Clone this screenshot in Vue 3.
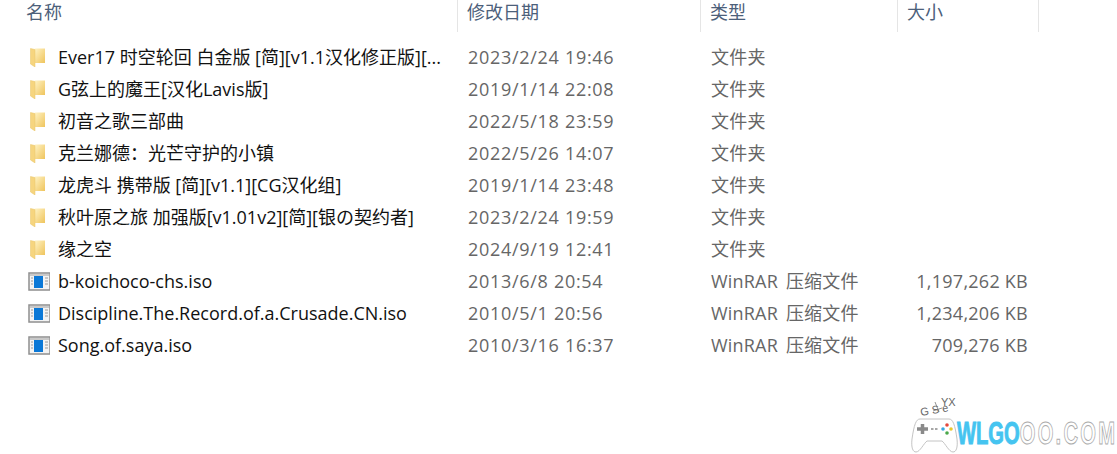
<template>
  <div class="explorer">
    <div class="head">
      <div v-for="c in columns" :key="c.label" class="head-cell" :class="c.cls">{{ c.label }}</div>
    </div>
    <div class="list">
      <div v-for="f in files" :key="f.name" class="row">
        <div class="name">
          <svg v-if="f.folder" class="icon" width="22" height="20" viewBox="0 0 22 20">
            <defs>
              <linearGradient id="fold" x1="0" y1="0" x2="1" y2="1">
                <stop offset="0" stop-color="#fff3c4" />
                <stop offset="1" stop-color="#efc45c" />
              </linearGradient>
            </defs>
            <path d="M7 1.500h10v14.500H7z" fill="url(#fold)" />
            <path d="M2.500 1.500 7 2.500v17.500L2.500 17z" fill="#f6d57f" stroke="#e9c469" stroke-width=".5" />
          </svg>
          <svg v-else class="icon" width="22" height="20" viewBox="0 0 22 20">
            <rect x="1" y="2" width="21" height="17" fill="#f3f3f3" stroke="#8f8f8f" stroke-width="1.500" />
            <rect x="2" y="3" width="19" height="2" fill="#c9c9c9" />
            <rect x="6" y="5" width="9" height="12" fill="#0a78d7" />
            <path d="M3 7h2M3 10h2M3 13h2M17 7h3M17 10h3M17 13h3" stroke="#9a9a9a" stroke-width="1" />
          </svg>
          <span class="label">{{ f.name }}</span>
        </div>
        <div class="cell date">{{ f.date }}</div>
        <div class="cell type">{{ f.type }}</div>
        <div class="cell size">{{ f.size }}</div>
      </div>
    </div>
    <div class="mark">
      <svg width="50" height="66" viewBox="0 0 50 66" class="pad">
        <text x="11" y="28" class="scrawl" transform="rotate(-10 11 28)">G S e</text>
        <text x="31" y="18" class="scrawl">YX</text>
        <text x="20" y="37" class="scrawl small">HJ</text>
        <path d="M25 14 29 24M23 23l9-3" stroke="#777" stroke-width=".8" fill="none" />
        <path d="M10 31h29c4 0 6 6 8 20 1 9-1 13-4 13-4 0-8-9-11-11H17c-3 2-7 11-11 11-3 0-5-4-4-13 2-14 4-20 8-20z" fill="#fff" stroke="#c4c4c4" />
        <path d="M7 41h11M12.500 36v10" stroke="#8a8a8a" stroke-width="3.500" />
        <path d="M21 41h7" stroke="#8a8a8a" stroke-width="1.500" stroke-dasharray="2.500 1.500" />
        <circle cx="37" cy="37" r="1.800" fill="#e5483c" />
        <circle cx="41" cy="41" r="1.800" fill="#e9c82e" />
        <circle cx="37" cy="45" r="1.800" fill="#4aa84a" />
        <circle cx="33" cy="41" r="1.800" fill="#3aa8e0" />
      </svg>
      <span class="mark-text"><span class="blue">WLGO</span><span class="grey">OO.COM</span></span>
    </div>
  </div>
</template>

<script setup>
const columns = [
  { label: '名称', cls: 'c-name' },
  { label: '修改日期', cls: 'c-date' },
  { label: '类型', cls: 'c-type' },
  { label: '大小', cls: 'c-size' }
]

const folder = '文件夹'
const rar = 'WinRAR 压缩文件'

const files = [
  { name: 'Ever17 时空轮回 白金版 [简][v1.1汉化修正版][...', date: '2023/2/24 19:46', type: folder, size: '', folder: true },
  { name: 'G弦上的魔王[汉化Lavis版]', date: '2019/1/14 22:08', type: folder, size: '', folder: true },
  { name: '初音之歌三部曲', date: '2022/5/18 23:59', type: folder, size: '', folder: true },
  { name: '克兰娜德：光芒守护的小镇', date: '2022/5/26 14:07', type: folder, size: '', folder: true },
  { name: '龙虎斗 携带版 [简][v1.1][CG汉化组]', date: '2019/1/14 23:48', type: folder, size: '', folder: true },
  { name: '秋叶原之旅 加强版[v1.01v2][简][银の契约者]', date: '2023/2/24 19:59', type: folder, size: '', folder: true },
  { name: '缘之空', date: '2024/9/19 12:41', type: folder, size: '', folder: true },
  { name: 'b-koichoco-chs.iso', date: '2013/6/8 20:54', type: rar, size: '1,197,262 KB' },
  { name: 'Discipline.The.Record.of.a.Crusade.CN.iso', date: '2010/5/1 20:56', type: rar, size: '1,234,206 KB' },
  { name: 'Song.of.saya.iso', date: '2010/3/16 16:37', type: rar, size: '709,276 KB' }
]
</script>

<style>
html, body {
  background: #fff;
  overflow: hidden;
}
</style>

<style scoped>
.explorer {
  position: relative;
  width: 1117px;
  height: 454px;
  overflow: hidden;
  background: #fff;
  font-family: "Open Sans", "Noto Sans CJK SC", sans-serif;
  font-size: 18px;
}

.head {
  display: grid;
  grid-template-columns: 458px 243px 197px 141px;
  height: 32px;
  color: #4c607a;
}

.head-cell {
  padding-left: 9px;
  border-right: 1px solid #e5e5e5;
  line-height: 25px;
  box-sizing: border-box;
}

.c-name {
  padding-left: 26px;
}

.list {
  padding-top: 9px;
}

.row {
  display: grid;
  grid-template-columns: 458px 243px 197px 187px;
  height: 32px;
  line-height: 30px;
  align-items: center;
}

.name {
  display: flex;
  align-items: center;
  padding-left: 28px;
  color: #111;
  white-space: nowrap;
}

.icon {
  width: 22px;
  flex: none;
}

.label {
  margin-left: 8px;
}

.cell {
  padding-left: 10px;
  color: #666;
  white-space: nowrap;
}

.date {
  letter-spacing: 0.7px;
}

.type {
  word-spacing: 3px;
  letter-spacing: 0.2px;
}

.size {
  text-align: right;
  padding-right: 57px;
  letter-spacing: 0.25px;
}

.mark {
  position: absolute;
  left: 910px;
  top: 388px;
  display: flex;
}

.scrawl {
  font-size: 11px;
  fill: #666;
  font-family: "Liberation Sans", sans-serif;
}

.small {
  font-size: 9px;
}

.mark-text {
  position: absolute;
  left: 47px;
  top: 27px;
  font-family: "Liberation Sans", sans-serif;
  font-weight: 700;
  font-size: 32px;
  line-height: 36px;
  white-space: nowrap;
  transform: scaleX(0.63);
  transform-origin: left top;
}

.blue {
  color: #45c4f0;
  -webkit-text-stroke: 1px #45c4f0;
}

.grey {
  color: #fff;
  letter-spacing: 3.600px;
  -webkit-text-stroke: 1px #aaa;
}
</style>
